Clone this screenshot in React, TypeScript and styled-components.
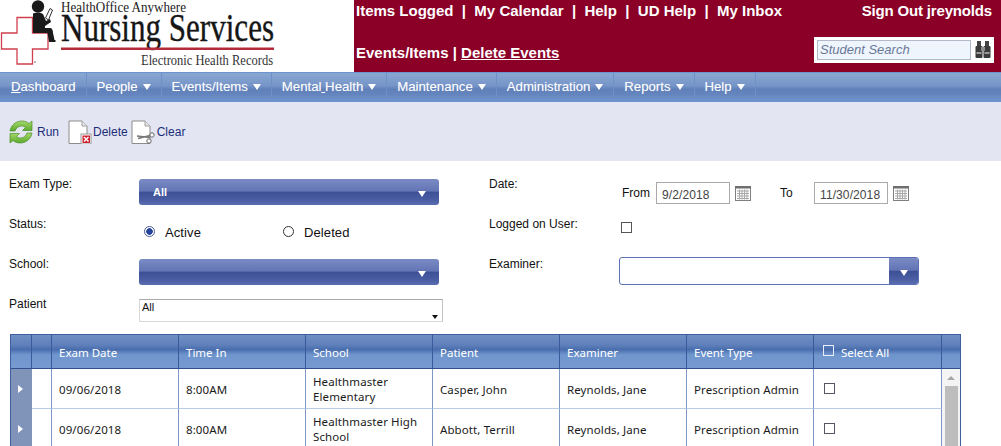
import React from 'react';
import styled, { createGlobalStyle } from 'styled-components';

const GlobalStyle = createGlobalStyle`
  html, body {
    margin: 0;
    padding: 0;
    height: 446px;
    overflow: hidden;
    background: #ffffff;
    font-family: 'Liberation Sans', Arial, sans-serif;
  }
`;

const Page = styled.div`
  width: 1001px;
  height: 446px;
  overflow: hidden;
  display: flex;
  flex-direction: column;
  & > * {
    flex: none;
  }
`;

const Header = styled.header`
  height: 72px;
  display: flex;
`;

const LogoBox = styled.div`
  width: 354px;
  height: 72px;
  flex: none;
  background: #ffffff;
`;

const HeaderPanel = styled.div`
  flex: 1;
  background: #8a0027;
  color: #ffffff;
  font-size: 15px;
  font-weight: 700;
  padding: 0 9px 0 2px;
  display: flex;
  flex-direction: column;
`;

const HeaderRow = styled.div<{ $height: number; $top: number }>`
  height: ${(p) => p.$height}px;
  box-sizing: border-box;
  padding-top: ${(p) => p.$top}px;
  display: flex;
  justify-content: space-between;
  align-items: center;
  white-space: pre;
`;

const SignOut = styled.span`
  letter-spacing: -0.17px;
`;

const EventLinks = styled.span`
  padding-top: 4px;
`;

const HeaderLink = styled.a`
  color: #ffffff;
  text-decoration: underline;
`;

const SearchBox = styled.div`
  width: 180px;
  height: 26px;
  background: #ffffff;
  display: flex;
  align-items: center;
  padding-left: 3px;
  gap: 4px;
  box-sizing: border-box;
  margin-right: -2px;
`;

const SearchInput = styled.div`
  width: 154px;
  height: 20px;
  box-sizing: border-box;
  background: #eef5fd;
  border: 1px solid #b5b8c8;
  color: #6a7898;
  font-size: 13px;
  font-weight: 400;
  font-style: italic;
  line-height: 18px;
  padding-left: 2px;
`;

const Nav = styled.nav`
  height: 28px;
  padding-left: 1px;
  border-top: 1px solid #6a94d2;
  border-bottom: 1px solid #6a94d2;
  background: linear-gradient(#8aa7d3 0%, #7695c8 45%, #6080b9 58%, #6484bd 75%, #7193cb 100%);
  display: flex;
`;

const NavItem = styled.div`
  padding: 0 10px;
  border-right: 1px solid #6f90c6;
  color: #ffffff;
  font-size: 13.2px;
  line-height: 28px;
  display: flex;
  align-items: center;
  white-space: pre;
  text-shadow: 0 0 1px rgba(255, 255, 255, 0.3);
`;

const NavArrow = styled.span`
  width: 0;
  height: 0;
  margin-left: 5px;
  border-left: 4px solid transparent;
  border-right: 4px solid transparent;
  border-top: 6px solid #ffffff;
`;

const Toolbar = styled.div`
  height: 59px;
  box-sizing: border-box;
  background: #e3e6f2;
  padding: 18px 0 0 9px;
  display: flex;
  align-items: flex-start;
`;

const ToolButton = styled.div<{ $gap: number; $right: number }>`
  display: flex;
  align-items: center;
  gap: ${(p) => p.$gap}px;
  margin-right: ${(p) => p.$right}px;
  color: #1c2d7a;
  font-size: 12px;
`;

const FormGrid = styled.section`
  padding: 17px 0 0 9px;
  display: grid;
  grid-template-columns: 130px 350px 130px 1fr;
  grid-template-rows: 40px 40px 40px 36px;
`;

const Label = styled.div`
  color: #111111;
  font-size: 12px;
  line-height: 13px;
`;

const Control = styled.div<{ $top: number }>`
  padding-top: ${(p) => p.$top}px;
  box-sizing: border-box;
  display: flex;
  align-items: flex-start;
`;

const BlueSelect = styled.div`
  width: 300px;
  height: 26px;
  box-sizing: border-box;
  border-radius: 3px;
  padding: 0 13px 0 14px;
  display: flex;
  align-items: center;
  justify-content: space-between;
  color: #ffffff;
  font-size: 11px;
  font-weight: 700;
  background: linear-gradient(#7a8bc4 0%, #6274b4 47%, #3d5096 50%, #4a5da2 80%, #5a6db0 100%);
`;

const SelectArrow = styled.span`
  width: 0;
  height: 0;
  margin-top: 3px;
  border-left: 4px solid transparent;
  border-right: 4px solid transparent;
  border-top: 6px solid #ffffff;
`;

const RadioRow = styled.div`
  padding-left: 5px;
  display: flex;
`;

const RadioGroup = styled.div<{ $width: number }>`
  width: ${(p) => p.$width}px;
  display: flex;
  align-items: center;
  gap: 10px;
  color: #111111;
  font-size: 13px;
  line-height: 17px;
  letter-spacing: 0.1px;
`;

const Radio = styled.span<{ $checked?: boolean }>`
  width: 11px;
  height: 11px;
  margin-top: -2px;
  box-sizing: border-box;
  border-radius: 50%;
  border: 1px solid ${(p) => (p.$checked ? '#4a5a9a' : '#333333')};
  background: ${(p) => (p.$checked ? 'radial-gradient(circle, #24439a 0 3px, #ffffff 3.5px)' : '#ffffff')};
  flex: none;
`;

const PatientSelect = styled.div`
  width: 304px;
  height: 23px;
  box-sizing: border-box;
  border: 1px solid #d8d8d8;
  border-top-color: #a9a9a9;
  border-right-color: #c4c4c4;
  padding: 1px 4px 0 2px;
  font-size: 11px;
  color: #111111;
  display: flex;
  justify-content: space-between;
`;

const PatientArrow = styled.span`
  width: 0;
  height: 0;
  margin-top: 14px;
  border-left: 3px solid transparent;
  border-right: 3px solid transparent;
  border-top: 4px solid #111111;
`;

const DateRow = styled.div`
  display: flex;
  align-items: flex-start;
  padding-left: 3px;
  color: #111111;
  font-size: 12px;
`;

const DateLabel = styled.span<{ $width: number }>`
  width: ${(p) => p.$width}px;
  line-height: 23px;
`;

const DateInput = styled.div`
  width: 74px;
  height: 22px;
  box-sizing: border-box;
  border: 1px solid #aaaaaa;
  padding-left: 5px;
  color: #444444;
  font-size: 12px;
  line-height: 24px;
  letter-spacing: 0.1px;
`;

const CalendarWrap = styled.span<{ $right: number }>`
  margin: 4px ${(p) => p.$right}px 0 5px;
  display: flex;
`;

const CheckBox = styled.span<{ $color: string; $left?: number }>`
  display: block;
  width: 11px;
  height: 11px;
  margin-left: ${(p) => p.$left ?? 0}px;
  box-sizing: border-box;
  border: 1px solid ${(p) => p.$color};
  flex: none;
`;

const HeadCheckBox = styled(CheckBox)`
  margin-bottom: 3px;
`;

const Combo = styled.div`
  width: 300px;
  height: 28px;
  margin-top: -1px;
  box-sizing: border-box;
  border: 1px solid #5c70b5;
  border-radius: 3px;
  overflow: hidden;
  display: flex;
  justify-content: flex-end;
`;

const ComboButton = styled.div`
  width: 29px;
  display: flex;
  align-items: center;
  justify-content: center;
  background: linear-gradient(#7a8bc4 0%, #6274b4 47%, #3d5096 50%, #4a5da2 80%, #5a6db0 100%);
`;

const GridTable = styled.div`
  margin-left: 10px;
  width: 951px;
  box-sizing: border-box;
  border: 1px solid #3f5f9f;
  border-bottom: none;
  display: grid;
  grid-template-columns: 21px 20px 127px 127px 127px 127px 127px 127px 128px 18px;
  grid-template-rows: 34px 40px 40px;
  font-family: 'Noto Sans', 'Open Sans', sans-serif;
  font-size: 11.5px;
`;

const HeadCell = styled.div`
  border-right: 1px solid #3b5a9b;
  border-bottom: 1px solid #2f4f8f;
  padding: 1px 0 0 7px;
  color: #ffffff;
  display: flex;
  align-items: center;
  gap: 7px;
  background: linear-gradient(#6f8fc4 0%, #5f80ba 30%, #4a6dae 44%, #7096cd 60%, #7699d0 100%);
`;

const EmptyHeadCell = styled(HeadCell)<{ $plain?: boolean }>`
  padding: 0;
  ${(p) => (p.$plain ? 'border-right: none;' : '')}
`;

const RowHeader = styled.div`
  background: #7f94b8;
  display: flex;
  align-items: center;
  padding-left: 7px;
`;

const RowArrow = styled.span`
  width: 0;
  height: 0;
  border-top: 4.5px solid transparent;
  border-bottom: 4.5px solid transparent;
  border-left: 5px solid #ffffff;
`;

const BodyCell = styled.div`
  border-right: 1px solid #7d98c2;
  border-bottom: 1px solid #b9cce5;
  padding: 1px 7px 0;
  color: #1a1a1a;
  display: flex;
  align-items: center;
  line-height: 15px;
  letter-spacing: 0.1px;
`;

const CheckCell = styled(BodyCell)`
  align-items: flex-start;
  padding: 14px 0 0 10px;
`;

const ScrollCell = styled.div`
  grid-column: 10;
  grid-row: 2 / span 2;
  background: #f4f4f4;
  display: flex;
  flex-direction: column;
  align-items: center;
`;

const ScrollArrow = styled.span`
  width: 0;
  height: 0;
  margin: 7px 0 6px;
  border-left: 4px solid transparent;
  border-right: 4px solid transparent;
  border-bottom: 4px solid #a6a6a6;
`;

const ScrollThumb = styled.div`
  width: 13px;
  flex: 1;
  background: #bdbdbd;
`;

const CalendarIcon = () => (
  <svg width="16" height="15" viewBox="0 0 16 15">
    <rect x="0.5" y="0.5" width="15" height="14" fill="#ffffff" stroke="#7f7f7f" />
    <rect x="0" y="0" width="16" height="2.5" fill="#6f6f6f" />
    <path d="M2 5h12M2 7.5h12M2 10h12M2 12.5h12M4.5 3.5v10M7 3.5v10M9.5 3.5v10M12 3.5v10" stroke="#a8a8a8" strokeWidth="1" fill="none" />
  </svg>
);

const RunIcon = () => (
  <svg width="24" height="24" viewBox="0 0 24 24">
    <defs>
      <linearGradient id="runGreen" x1="0" y1="0" x2="0" y2="1">
        <stop offset="0" stopColor="#a6d96a" />
        <stop offset="1" stopColor="#5aa82c" />
      </linearGradient>
    </defs>
    <path d="M1 11C2 5 7 1 13 1C16 1 18.500 2.200 20 3.500L23 1V10.500H13.500L16.500 7.500C15.500 6.600 14 6 12.500 6C9.500 6 7 8 6 11Z" fill="url(#runGreen)" stroke="#4c8f27" strokeWidth="0.7" />
    <path d="M23 13C22 19 17 23 11 23C8 23 5.500 21.800 4 20.500L1 23V13.500H10.500L7.500 16.500C8.500 17.400 10 18 11.500 18C14.500 18 17 16 18 13Z" fill="url(#runGreen)" stroke="#4c8f27" strokeWidth="0.7" />
  </svg>
);

const PageShape = () => (
  <>
    <path d="M1 1H14L19 6V23.500H1Z" fill="#ffffff" stroke="#8c8c8c" strokeWidth="1" strokeLinejoin="round" />
    <path d="M14 1V6H19" fill="#e8e8e8" stroke="#a0a0a0" />
  </>
);

const DeleteIcon = () => (
  <svg width="24" height="24" viewBox="0 0 24 24">
    <PageShape />
    <rect x="13" y="14" width="10" height="10" fill="#ffffff" stroke="#9a9a9a" />
    <rect x="14.500" y="15.500" width="7.500" height="7.500" fill="#cf1f2e" />
    <path d="M16 17L20.500 21.500M20.500 17L16 21.500" stroke="#ffffff" strokeWidth="1.500" />
  </svg>
);

const ClearIcon = () => (
  <svg width="24" height="24" viewBox="0 0 24 24">
    <PageShape />
    <path d="M6 16L19 17.500M7 18.500L19 15.500" stroke="#777777" strokeWidth="1.300" fill="none" />
    <circle cx="21" cy="15" r="2.200" fill="#ffffff" stroke="#666666" />
    <circle cx="18" cy="21" r="2.200" fill="#ffffff" stroke="#666666" />
  </svg>
);

const BinocularsIcon = () => (
  <svg width="16" height="20" viewBox="0 0 16 20">
    <rect x="2" y="1" width="4" height="5" fill="#444444" />
    <rect x="10" y="1" width="4" height="5" fill="#444444" />
    <rect x="0.500" y="6" width="7" height="12" rx="1" fill="#3a3a3a" />
    <rect x="8.500" y="6" width="7" height="12" rx="1" fill="#3a3a3a" />
    <rect x="6" y="7" width="4" height="4" fill="#8d8d8d" />
    <rect x="1.500" y="12" width="5" height="2" fill="#9a9a9a" />
    <rect x="9.500" y="12" width="5" height="2" fill="#9a9a9a" />
  </svg>
);

const Logo = () => (
  <svg width="354" height="72" viewBox="0 0 354 72">
    <path d="M17 17.500H32.500V33H48V49H32.500V64H17V49H1.500V33H17Z" fill="#ffffff" stroke="#d0404e" strokeWidth="1.300" />
    <circle cx="38" cy="6.500" r="6.200" fill="#1a1a1a" />
    <path d="M33 13.500C35 12.500 41 12.500 43 14L46 21L50 19L51 22L45 26V28H50C52 28 53 30 53 33L54.500 40H55.500V42H49L47.500 33H33Z" fill="#1a1a1a" />
    <path d="M45.500 18L50 8.500L52.500 10L48.500 20Z" fill="#ffffff" stroke="#333333" strokeWidth="1" />
    <circle cx="35" cy="62" r="0.900" fill="#999999" />
    <text x="61" y="12" fontFamily="'Liberation Serif', serif" fontSize="15" fill="#222222" textLength="125" lengthAdjust="spacingAndGlyphs">
      HealthOffice Anywhere
    </text>
    <text x="61" y="41" fontFamily="'Liberation Serif', serif" fontSize="40" fill="#161616" stroke="#161616" strokeWidth="0.400" textLength="213" lengthAdjust="spacingAndGlyphs">
      Nursing Services
    </text>
    <rect x="61" y="47.500" width="213" height="2.500" fill="#b32b3a" />
    <text x="141" y="65" fontFamily="'Liberation Serif', serif" fontSize="14" fill="#333333" textLength="132" lengthAdjust="spacingAndGlyphs">
      Electronic Health Records
    </text>
  </svg>
);

type Exam = { date: string; time: string; school: string; patient: string };

const exams: Exam[] = [
  { date: '09/06/2018', time: '8:00AM', school: 'Healthmaster Elementary', patient: 'Casper, John' },
  { date: '09/06/2018', time: '8:00AM', school: 'Healthmaster High School', patient: 'Abbott, Terrill' },
];

const navItems: { label: React.ReactNode; arrow: boolean }[] = [
  { label: <><u>D</u>ashboard</>, arrow: false },
  { label: 'People', arrow: true },
  { label: 'Events/Items', arrow: true },
  { label: <>Mental<u> </u>Health</>, arrow: true },
  { label: 'Maintenance', arrow: true },
  { label: 'Administration', arrow: true },
  { label: 'Reports', arrow: true },
  { label: 'Help', arrow: true },
];

export default function App() {
  return (
    <Page>
      <GlobalStyle />
      <Header>
        <LogoBox>
          <Logo />
        </LogoBox>
        <HeaderPanel>
          <HeaderRow $height={20} $top={0}>
            <span>{'Items Logged  |  My Calendar  |  Help  |  UD Help  |  My Inbox'}</span>
            <SignOut>Sign Out jreynolds</SignOut>
          </HeaderRow>
          <HeaderRow $height={52} $top={8}>
            <EventLinks>
              Events/Items | <HeaderLink>Delete Events</HeaderLink>
            </EventLinks>
            <SearchBox>
              <SearchInput>Student Search</SearchInput>
              <BinocularsIcon />
            </SearchBox>
          </HeaderRow>
        </HeaderPanel>
      </Header>

      <Nav>
        {navItems.map((item, i) => (
          <NavItem key={i}>
            {item.label}
            {item.arrow && <NavArrow />}
          </NavItem>
        ))}
      </Nav>

      <Toolbar>
        <ToolButton $gap={4} $right={9}>
          <RunIcon />
          Run
        </ToolButton>
        <ToolButton $gap={1} $right={3}>
          <DeleteIcon />
          Delete
        </ToolButton>
        <ToolButton $gap={2} $right={0}>
          <ClearIcon />
          Clear
        </ToolButton>
      </Toolbar>

      <FormGrid>
        <Label>Exam Type:</Label>
        <Control $top={1}>
          <BlueSelect>
            All
            <SelectArrow />
          </BlueSelect>
        </Control>
        <Label>Date:</Label>
        <Control $top={4}>
          <DateRow>
            <DateLabel $width={34}>From</DateLabel>
            <DateInput>9/2/2018</DateInput>
            <CalendarWrap $right={29}>
              <CalendarIcon />
            </CalendarWrap>
            <DateLabel $width={34}>To</DateLabel>
            <DateInput>11/30/2018</DateInput>
            <CalendarWrap $right={0}>
              <CalendarIcon />
            </CalendarWrap>
          </DateRow>
        </Control>

        <Label>Status:</Label>
        <Control $top={6}>
          <RadioRow>
            <RadioGroup $width={139}>
              <Radio $checked />
              Active
            </RadioGroup>
            <RadioGroup $width={80}>
              <Radio />
              Deleted
            </RadioGroup>
          </RadioRow>
        </Control>
        <Label>Logged on User:</Label>
        <Control $top={4}>
          <CheckBox $color="#555555" $left={2} />
        </Control>

        <Label>School:</Label>
        <Control $top={1}>
          <BlueSelect>
            <span />
            <SelectArrow />
          </BlueSelect>
        </Control>
        <Label>Examiner:</Label>
        <Control $top={0}>
          <Combo>
            <ComboButton>
              <SelectArrow />
            </ComboButton>
          </Combo>
        </Control>

        <Label>Patient</Label>
        <Control $top={1}>
          <PatientSelect>
            All
            <PatientArrow />
          </PatientSelect>
        </Control>
        <span />
        <span />
      </FormGrid>

      <GridTable>
        <EmptyHeadCell />
        <EmptyHeadCell />
        <HeadCell>Exam Date</HeadCell>
        <HeadCell>Time In</HeadCell>
        <HeadCell>School</HeadCell>
        <HeadCell>Patient</HeadCell>
        <HeadCell>Examiner</HeadCell>
        <HeadCell>Event Type</HeadCell>
        <HeadCell>
          <HeadCheckBox $color="#e8eefa" $left={2} />
          Select All
        </HeadCell>
        <EmptyHeadCell $plain />
        {exams.map((exam) => (
          <React.Fragment key={exam.patient}>
            <RowHeader>
              <RowArrow />
            </RowHeader>
            <BodyCell />
            <BodyCell>{exam.date}</BodyCell>
            <BodyCell>{exam.time}</BodyCell>
            <BodyCell>{exam.school}</BodyCell>
            <BodyCell>{exam.patient}</BodyCell>
            <BodyCell>Reynolds, Jane</BodyCell>
            <BodyCell>Prescription Admin</BodyCell>
            <CheckCell>
              <CheckBox $color="#555566" />
            </CheckCell>
          </React.Fragment>
        ))}
        <ScrollCell>
          <ScrollArrow />
          <ScrollThumb />
        </ScrollCell>
      </GridTable>
    </Page>
  );
}
